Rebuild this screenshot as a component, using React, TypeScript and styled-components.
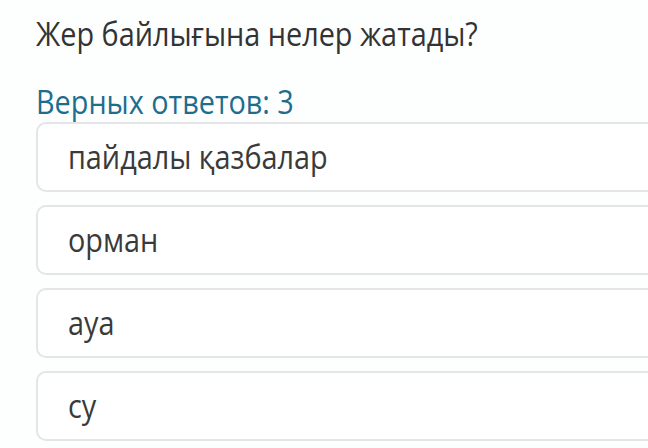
import React from "react";
import styled, { createGlobalStyle } from "styled-components";

const GlobalStyle = createGlobalStyle`
    html, body {
        margin: 0;
        padding: 0;
        background: #fdfefe;
        overflow: hidden;
    }
    body {
        font-family: "Open Sans", "Noto Sans", sans-serif;
    }
`
const Page = styled.div`
    width: 648px;
    height: 448px;
    padding: 14px 0 0 36px;
    box-sizing: border-box;
    overflow: hidden;
`
// the screenshot text is a little narrower than plain Open Sans
const Narrow = styled.span`
    display: inline-block;
    white-space: nowrap;
    transform: scaleX(0.9);
    transform-origin: left center;
`
const Question = styled.h1`
    margin: 0;
    font-size: 32px;
    font-weight: 400;
    line-height: 40px;
    color: #333333;
`
const Hint = styled.p`
    margin: 28px 0 0;
    font-size: 32px;
    line-height: 40px;
    color: #1d6d8e;
`
const Options = styled.div`
    display: flex;
    flex-direction: column;
    gap: 13px;
`
const Option = styled.div`
    display: flex;
    align-items: center;
    height: 70px;
    width: 640px;
    box-sizing: border-box;
    padding: 0 0 0 30px;
    background: #ffffff;
    border: 2px solid #e3e5e6;
    border-radius: 10px;
    font-size: 32px;
    line-height: 40px;
    color: #3a3a3a;
`

const answers = ["пайдалы қазбалар", "орман", "ауа", "су"];

function App() {
    return (
        <>
            <GlobalStyle />
            <Page>
                <Question><Narrow>Жер байлығына нелер жатады?</Narrow></Question>
                <Hint><Narrow>Верных ответов: 3</Narrow></Hint>
                <Options>
                    {answers.map((a) => (
                        <Option key={a}><Narrow>{a}</Narrow></Option>
                    ))}
                </Options>
            </Page>
        </>
    )
}

export default App;
